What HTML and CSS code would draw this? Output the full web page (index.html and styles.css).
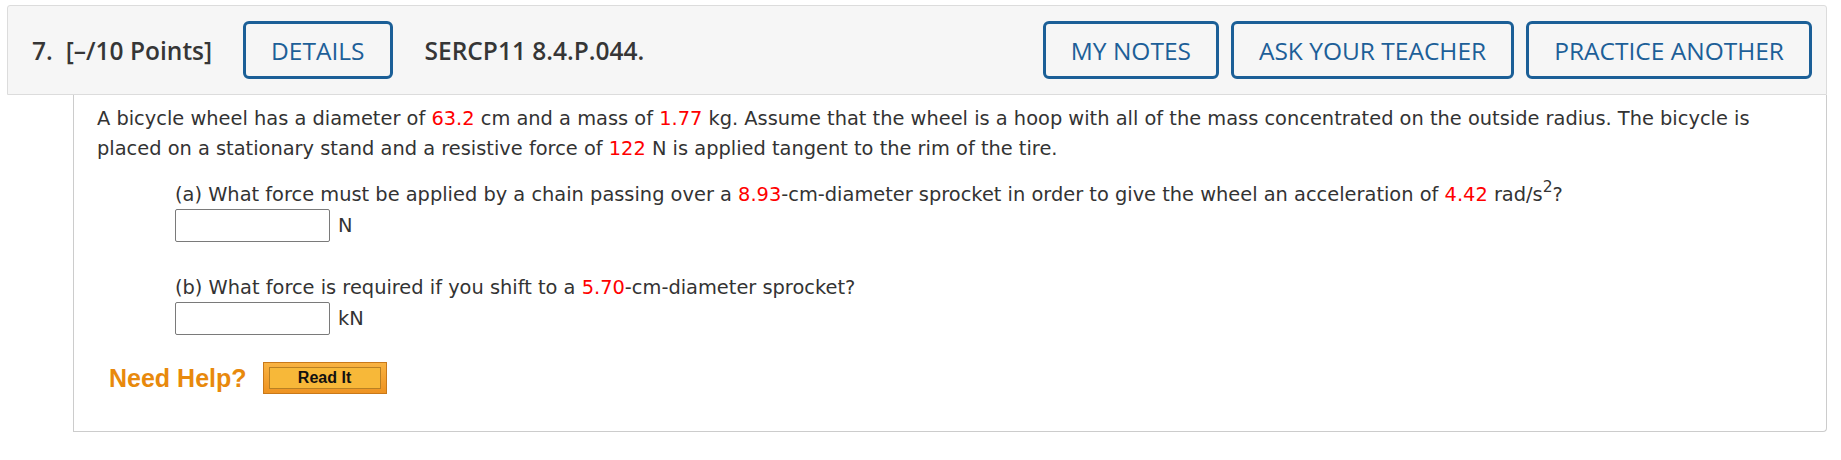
FILE: index.html
```html
<!DOCTYPE html>
<html>
<head>
<meta charset="utf-8">
<link rel="stylesheet" href="styles.css">
</head>
<body>
<div class="page">
  <div class="q-header">
    <span class="q-num">7.</span>
    <span class="q-points">[–/10 Points]</span>
    <button class="q-btn">DETAILS</button>
    <span class="q-code">SERCP11 8.4.P.044.</span>
    <div class="q-actions">
      <button class="q-btn">MY NOTES</button>
      <button class="q-btn">ASK YOUR TEACHER</button>
      <button class="q-btn">PRACTICE ANOTHER</button>
    </div>
  </div>
  <div class="q-body">
    <p class="q-text">A bicycle wheel has a diameter of <span class="val">63.2</span> cm and a mass of <span class="val">1.77</span> kg. Assume that the wheel is a hoop with all of the mass concentrated on the outside radius. The bicycle is placed on a stationary stand and a resistive force of <span class="val">122</span> N is applied tangent to the rim of the tire.</p>
    <div class="part part-a">
      <p class="q-text">(a) What force must be applied by a chain passing over a <span class="val">8.93</span>-cm-diameter sprocket in order to give the wheel an acceleration of <span class="val">4.42</span> rad/s<sup>2</sup>?</p>
      <div class="answer-row">
        <input class="answer" type="text">
        <span class="unit">N</span>
      </div>
    </div>
    <div class="part part-b">
      <p class="q-text">(b) What force is required if you shift to a <span class="val">5.70</span>-cm-diameter sprocket?</p>
      <div class="answer-row">
        <input class="answer" type="text">
        <span class="unit">kN</span>
      </div>
    </div>
    <div class="help-row">
      <span class="need-help">Need Help?</span>
      <span class="read-it"><span class="read-it-inner">Read It</span></span>
    </div>
  </div>
</div>
</body>
</html>
```
FILE: styles.css
```css
html, body {
  margin: 0;
  padding: 0;
  background: #ffffff;
}
.page {
  padding: 5px 14px 0 7px;
}
.q-header {
  display: flex;
  align-items: center;
  height: 88px;
  background: #f6f6f6;
  border: 1px solid #dcdcdc;
  border-radius: 3px 3px 0 0;
  padding: 0 14px 0 24px;
  font-family: "Open Sans", sans-serif;
  font-size: 24.5px;
  color: #363636;
}
.q-num {
  font-weight: 600;
  margin-right: 13px;
}
.q-points {
  font-weight: 600;
  margin-right: 31px;
}
.q-code {
  font-weight: 600;
  margin-left: 32px;
}
.q-btn {
  height: 58px;
  padding: 0 25px;
  border: 3px solid #1b5f97;
  border-radius: 6px;
  background: transparent;
  color: #1d5f98;
  font-family: "Open Sans", sans-serif;
  font-size: 24.5px;
  font-weight: 400;
  cursor: pointer;
}
.q-actions {
  margin-left: auto;
  display: flex;
  gap: 12px;
}
.q-body {
  margin-left: 66px;
  border: 1px solid #cccccc;
  border-top: none;
  border-radius: 0 0 4px 0;
  padding: 9px 24px 37px 23px;
  font-family: "DejaVu Sans", Verdana, sans-serif;
  font-size: 19.4px;
  color: #333333;
}
.q-text {
  margin: 0;
  line-height: 30px;
}
.val {
  color: #ff0000;
}
sup {
  font-size: 0.8em;
  line-height: 0;
  vertical-align: 0.6em;
}
.part {
  margin-left: 78px;
}
.part-a {
  margin-top: 16px;
}
.part-b {
  margin-top: 31px;
}
.answer-row {
  display: flex;
  align-items: center;
  gap: 8px;
  margin-top: -1px;
}
.answer {
  box-sizing: border-box;
  width: 155px;
  height: 33px;
  margin: 0;
  border: 1px solid #7a7a7a;
  border-radius: 2px;
  background: #fff;
  padding: 0;
}
.unit {
  line-height: 30px;
}
.help-row {
  display: flex;
  align-items: center;
  gap: 16px;
  margin: 27px 0 0 12px;
}
.need-help {
  font-family: "Liberation Sans", Arial, sans-serif;
  font-weight: 700;
  font-size: 25px;
  color: #e8890c;
}
.read-it {
  box-sizing: border-box;
  width: 124px;
  height: 32px;
  padding: 4px 5px;
  border: 1px solid #c9791a;
  background: linear-gradient(#f9b342, #ee9322);
  display: flex;
}
.read-it-inner {
  flex: 1;
  display: flex;
  align-items: center;
  justify-content: center;
  border: 1px solid #b98023;
  background: #f7b839;
  font-family: "Liberation Sans", Arial, sans-serif;
  font-weight: 700;
  font-size: 16px;
  color: #111;
}
```
